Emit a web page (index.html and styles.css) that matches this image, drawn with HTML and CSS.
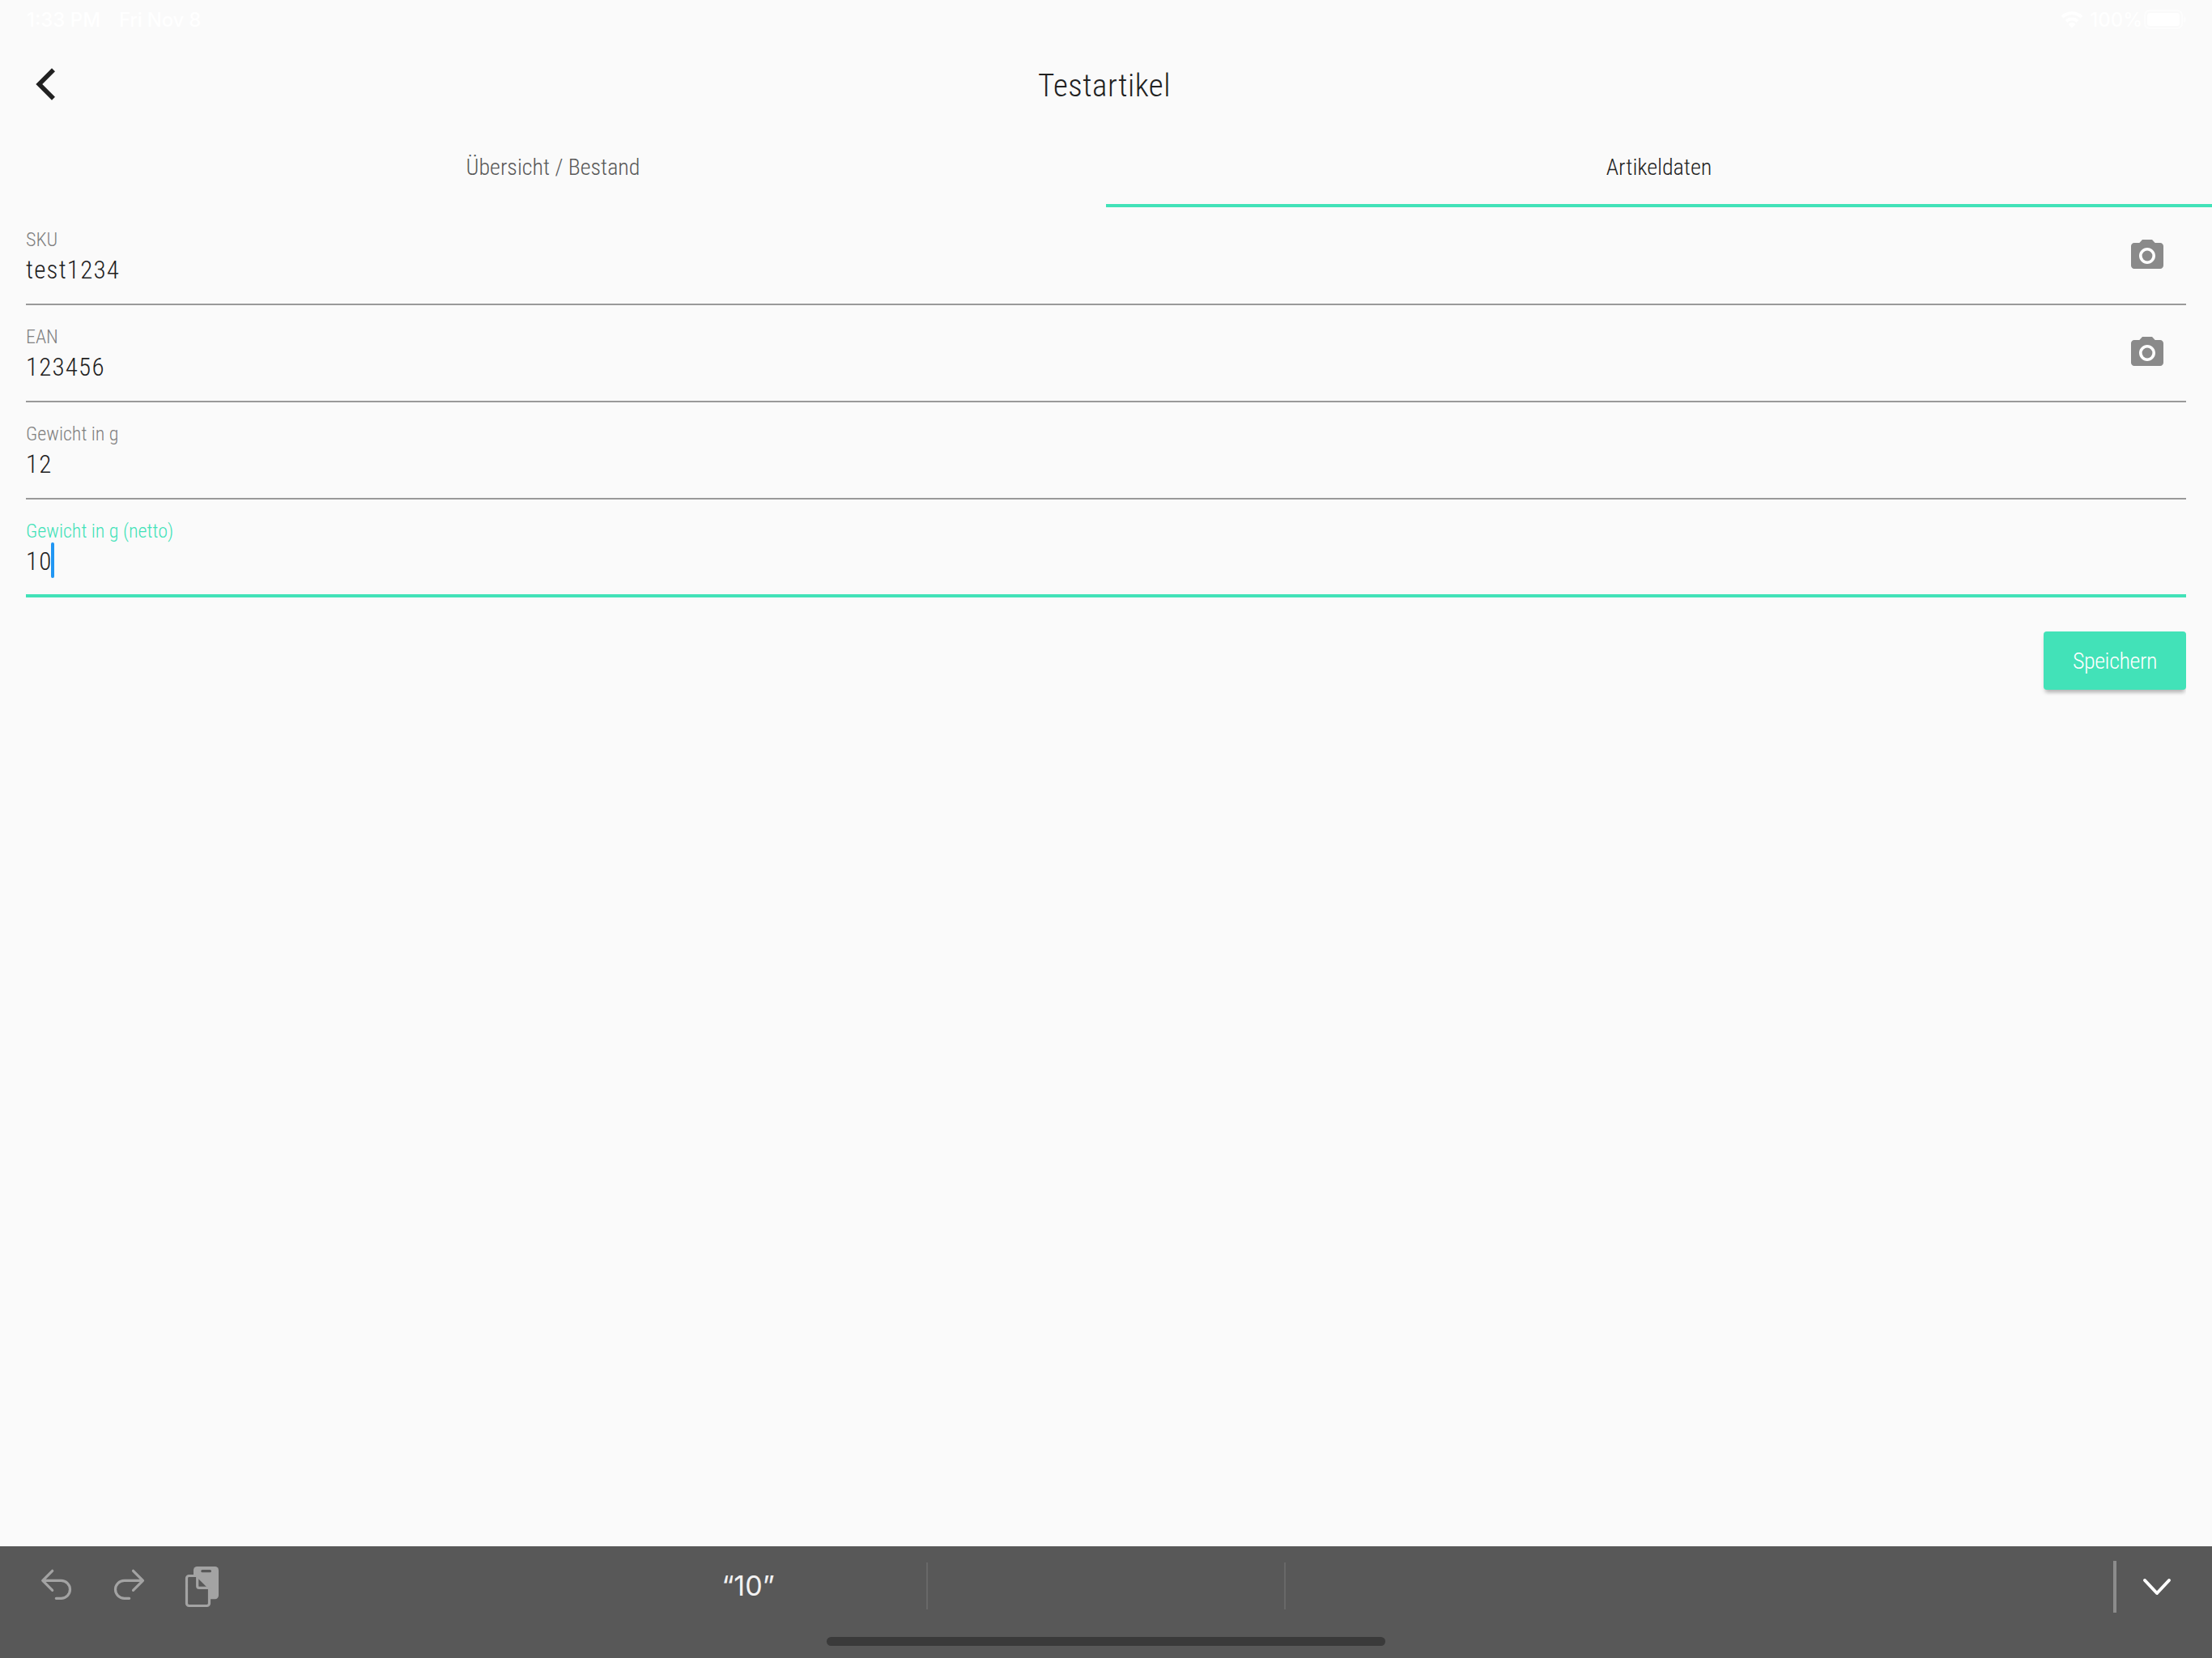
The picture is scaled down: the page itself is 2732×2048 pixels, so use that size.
FILE: index.html
```
<!DOCTYPE html>
<html lang="de">
<head>
  <meta charset="UTF-8" />
  <meta name="viewport" content="width=device-width, initial-scale=1.0"/>
  <title>Testartikel</title>
  <link rel="stylesheet" href="styles.css">
</head>
<body>

  <div class="status-bar">
    <span class="time">1:33 PM</span>
    <span class="date">Fri Nov 8</span>
    <svg class="wifi" width="28" height="22" viewBox="0 0 28 22">
      <path d="M2 8.2a17 17 0 0 1 24 0" fill="none" stroke="#fff" stroke-width="4"/>
      <path d="M7 13.4a10 10 0 0 1 14 0" fill="none" stroke="#fff" stroke-width="4"/>
      <path d="M14 21.5l-4.5-4.6a6.5 6.5 0 0 1 9 0z" fill="#fff"/>
    </svg>
    <span class="percent">100%</span>
    <svg class="battery" width="54" height="24" viewBox="0 0 54 24">
      <rect x="1" y="1" width="46" height="22" rx="6" fill="none" stroke="#fdfdfd" stroke-width="2"/>
      <rect x="4" y="4" width="40" height="16" rx="3.5" fill="#fff"/>
      <path d="M49.5 8a4.5 4.5 0 0 1 0 8z" fill="#fdfdfd"/>
    </svg>
  </div>

  <header class="header">
    <svg class="back" width="26" height="40" viewBox="0 0 26 40">
      <path d="M22 2.3L4.3 20L22 37.7" fill="none" stroke="#212121" stroke-width="5.6"/>
    </svg>
    <h1>Testartikel</h1>
  </header>

  <nav class="tabs">
    <div class="tab">Übersicht / Bestand</div>
    <div class="tab active">Artikeldaten</div>
  </nav>

  <main class="form">
    <div class="field">
      <div class="field-text">
        <div class="label">SKU</div>
        <div class="value">test1234</div>
      </div>
      <svg class="camera" width="48" height="48" viewBox="0 0 24 24">
        <circle class="ring" cx="12" cy="12" r="5"/>
        <circle cx="12" cy="12" r="3.2"/>
        <path d="M9 2L7.17 4H4c-1.1 0-2 .9-2 2v12c0 1.1.9 2 2 2h16c1.1 0 2-.9 2-2V6c0-1.1-.9-2-2-2h-3.17L15 2H9zm3 15c-2.76 0-5-2.24-5-5s2.24-5 5-5 5 2.24 5 5-2.24 5-5 5z"/>
      </svg>
    </div>
    <div class="field">
      <div class="field-text">
        <div class="label">EAN</div>
        <div class="value">123456</div>
      </div>
      <svg class="camera" width="48" height="48" viewBox="0 0 24 24">
        <circle class="ring" cx="12" cy="12" r="5"/>
        <circle cx="12" cy="12" r="3.2"/>
        <path d="M9 2L7.17 4H4c-1.1 0-2 .9-2 2v12c0 1.1.9 2 2 2h16c1.1 0 2-.9 2-2V6c0-1.1-.9-2-2-2h-3.17L15 2H9zm3 15c-2.76 0-5-2.24-5-5s2.24-5 5-5 5 2.24 5 5-2.24 5-5 5z"/>
      </svg>
    </div>
    <div class="field">
      <div class="field-text">
        <div class="label">Gewicht in g</div>
        <div class="value">12</div>
      </div>
    </div>
    <div class="field focused">
      <div class="field-text">
        <div class="label">Gewicht in g (netto)</div>
        <div class="value">10<span class="caret"></span></div>
      </div>
    </div>
    <div class="actions">
      <button class="save">Speichern</button>
    </div>
  </main>

  <footer class="keyboard-bar">
    <div class="keyboard-row">
      <div class="tools">
        <svg class="undo" width="40" height="54" viewBox="0 0 40 54">
          <path d="M14.7 6.3L2.7 18.3L14.7 30.3M2.7 18.3H25.5a11 11 0 0 1 0 22H19.3"/>
        </svg>
        <svg class="redo" width="40" height="54" viewBox="0 0 40 54">
          <path d="M24.5 6.3L36.5 18.3L24.5 30.3M36.5 18.3H13.5a11 11 0 0 0 0 22H19.7"/>
        </svg>
        <svg class="paste" width="44" height="54" viewBox="0 0 44 54">
          <rect class="board" x="11" y="1" width="31" height="40.3" rx="4.5"/>
          <rect class="clip" x="20.3" y="5" width="12.7" height="3.3" rx="1.6"/>
          <path class="page" d="M15.7 12.5H5.5a3 3 0 0 0-3 3V46.5a3 3 0 0 0 3 3H27.5a3 3 0 0 0 3-3V27.3z"/>
          <path class="fold" d="M15.7 12.5V25.3a2 2 0 0 0 2 2H30.5"/>
        </svg>
      </div>
      <div class="suggestion">“10”</div>
      <div class="suggestion"></div>
      <div class="suggestion last"></div>
      <div class="hide-keys">
        <svg width="40" height="26" viewBox="0 0 40 26">
          <path d="M5 5L20 21L35 5" fill="none" stroke="#fff" stroke-width="4" stroke-linecap="round" stroke-linejoin="round"/>
        </svg>
      </div>
    </div>
    <div class="home-indicator"></div>
  </footer>

</body>
</html>
```
FILE: styles.css
```
body {
  margin: 0;
  height: 100vh;
  display: flex;
  flex-direction: column;
  background-color: #fafafa;
  color: #212121;
  font-family: Roboto, "Open Sans", sans-serif;
  font-weight: 300;
  font-stretch: condensed;
  overflow: hidden;
}

.status-bar {
  display: flex;
  align-items: center;
  height: 48px;
  padding: 0 30px 0 33px;
  box-sizing: border-box;
  color: #fff;
  font-family: Inter, sans-serif;
  font-size: 24px;
  font-weight: 500;
  font-stretch: normal;
}

.date {
  margin-left: 23px;
  letter-spacing: -0.2px;
}

.wifi {
  margin-left: auto;
}

.percent {
  margin: 0 2px 0 8px;
}

.header {
  display: grid;
  grid-template-columns: 1fr auto 1fr;
  align-items: center;
  height: 112px;
  box-sizing: border-box;
}

.back {
  margin-left: 44px;
}

h1 {
  margin: 3px 4px 0 0;
  font-size: 39px;
  font-weight: 300;
  letter-spacing: 0.5px;
}

.tabs {
  display: flex;
  height: 96px;
}

.tab {
  flex: 1;
  display: flex;
  align-items: center;
  justify-content: center;
  border-bottom: 4px solid transparent;
  font-size: 28px;
  color: #585858;
}

.tab.active {
  color: #212121;
  border-bottom-color: #42e2b8;
}

.form {
  flex: 1;
  padding: 1px 32px 0;
}

.field {
  display: flex;
  justify-content: space-between;
  align-items: flex-start;
  height: 120px;
  box-sizing: border-box;
  border-bottom: 2px solid #999;
}

.field-text {
  padding-top: 25px;
}

.label {
  font-size: 24px;
  line-height: 28px;
  color: #808080;
}

.value {
  position: relative;
  margin-top: 4px;
  font-size: 31px;
  line-height: 40px;
  letter-spacing: 1.2px;
}

.camera {
  margin: 35px 24px 0 0;
  fill: #8a8a8a;
}

.camera .ring {
  fill: #fff;
}

.focused {
  height: 121px;
  border-bottom: 4px solid #42e2b8;
}

.focused .label {
  color: #42e2b8;
  font-weight: 350;
}

.caret {
  position: absolute;
  left: 31px;
  top: -4px;
  width: 4px;
  height: 44px;
  border-radius: 2px;
  background-color: #2196f3;
}

/* the shadow is cut off at the right edge of the form */
.actions {
  display: flex;
  justify-content: flex-end;
  margin-top: 32px;
  padding: 10px 0 20px;
  overflow: hidden;
}

.save {
  width: 176px;
  height: 72px;
  padding: 0;
  border: none;
  border-radius: 4px;
  background-color: #42e2b8;
  box-shadow: 0 6px 4px -3px rgba(0, 0, 0, 0.2), 0 4px 5px rgba(0, 0, 0, 0.1);
  color: #fff;
  font-family: inherit;
  font-size: 28px;
  font-weight: 350;
  font-stretch: condensed;
  letter-spacing: -0.4px;
}

.keyboard-bar {
  height: 138px;
  background-color: #585858;
}

.keyboard-row {
  display: flex;
  align-items: center;
  height: 98px;
}

.tools {
  display: flex;
  width: 704px;
  padding: 4px 0 0 50px;
  box-sizing: border-box;
}

.tools svg {
  fill: none;
  stroke: #a3a3a3;
  stroke-width: 3.2;
  stroke-linecap: round;
  stroke-linejoin: round;
}

.redo {
  margin: 0 48px 0 50px;
}

.tools .board {
  fill: #a3a3a3;
  stroke: none;
}

.tools .clip {
  fill: #585858;
  stroke: none;
}

.tools .page {
  fill: #585858;
}

.suggestion {
  width: 442px;
  height: 58px;
  box-sizing: border-box;
  border-right: 2px solid #686868;
  color: #f2f2f2;
  font-family: Inter, sans-serif;
  font-size: 34px;
  font-weight: 400;
  font-stretch: normal;
  line-height: 58px;
  text-align: center;
}

.suggestion.last {
  flex: 1;
  border-right: none;
}

.hide-keys {
  display: flex;
  align-items: center;
  width: 122px;
  height: 64px;
  margin-top: 2px;
  padding-left: 30px;
  box-sizing: border-box;
  border-left: 4px solid #8c8c8c;
}

.home-indicator {
  width: 690px;
  height: 11px;
  margin: 14px auto 0;
  border-radius: 6px;
  background-color: #3a3a3a;
}
```
